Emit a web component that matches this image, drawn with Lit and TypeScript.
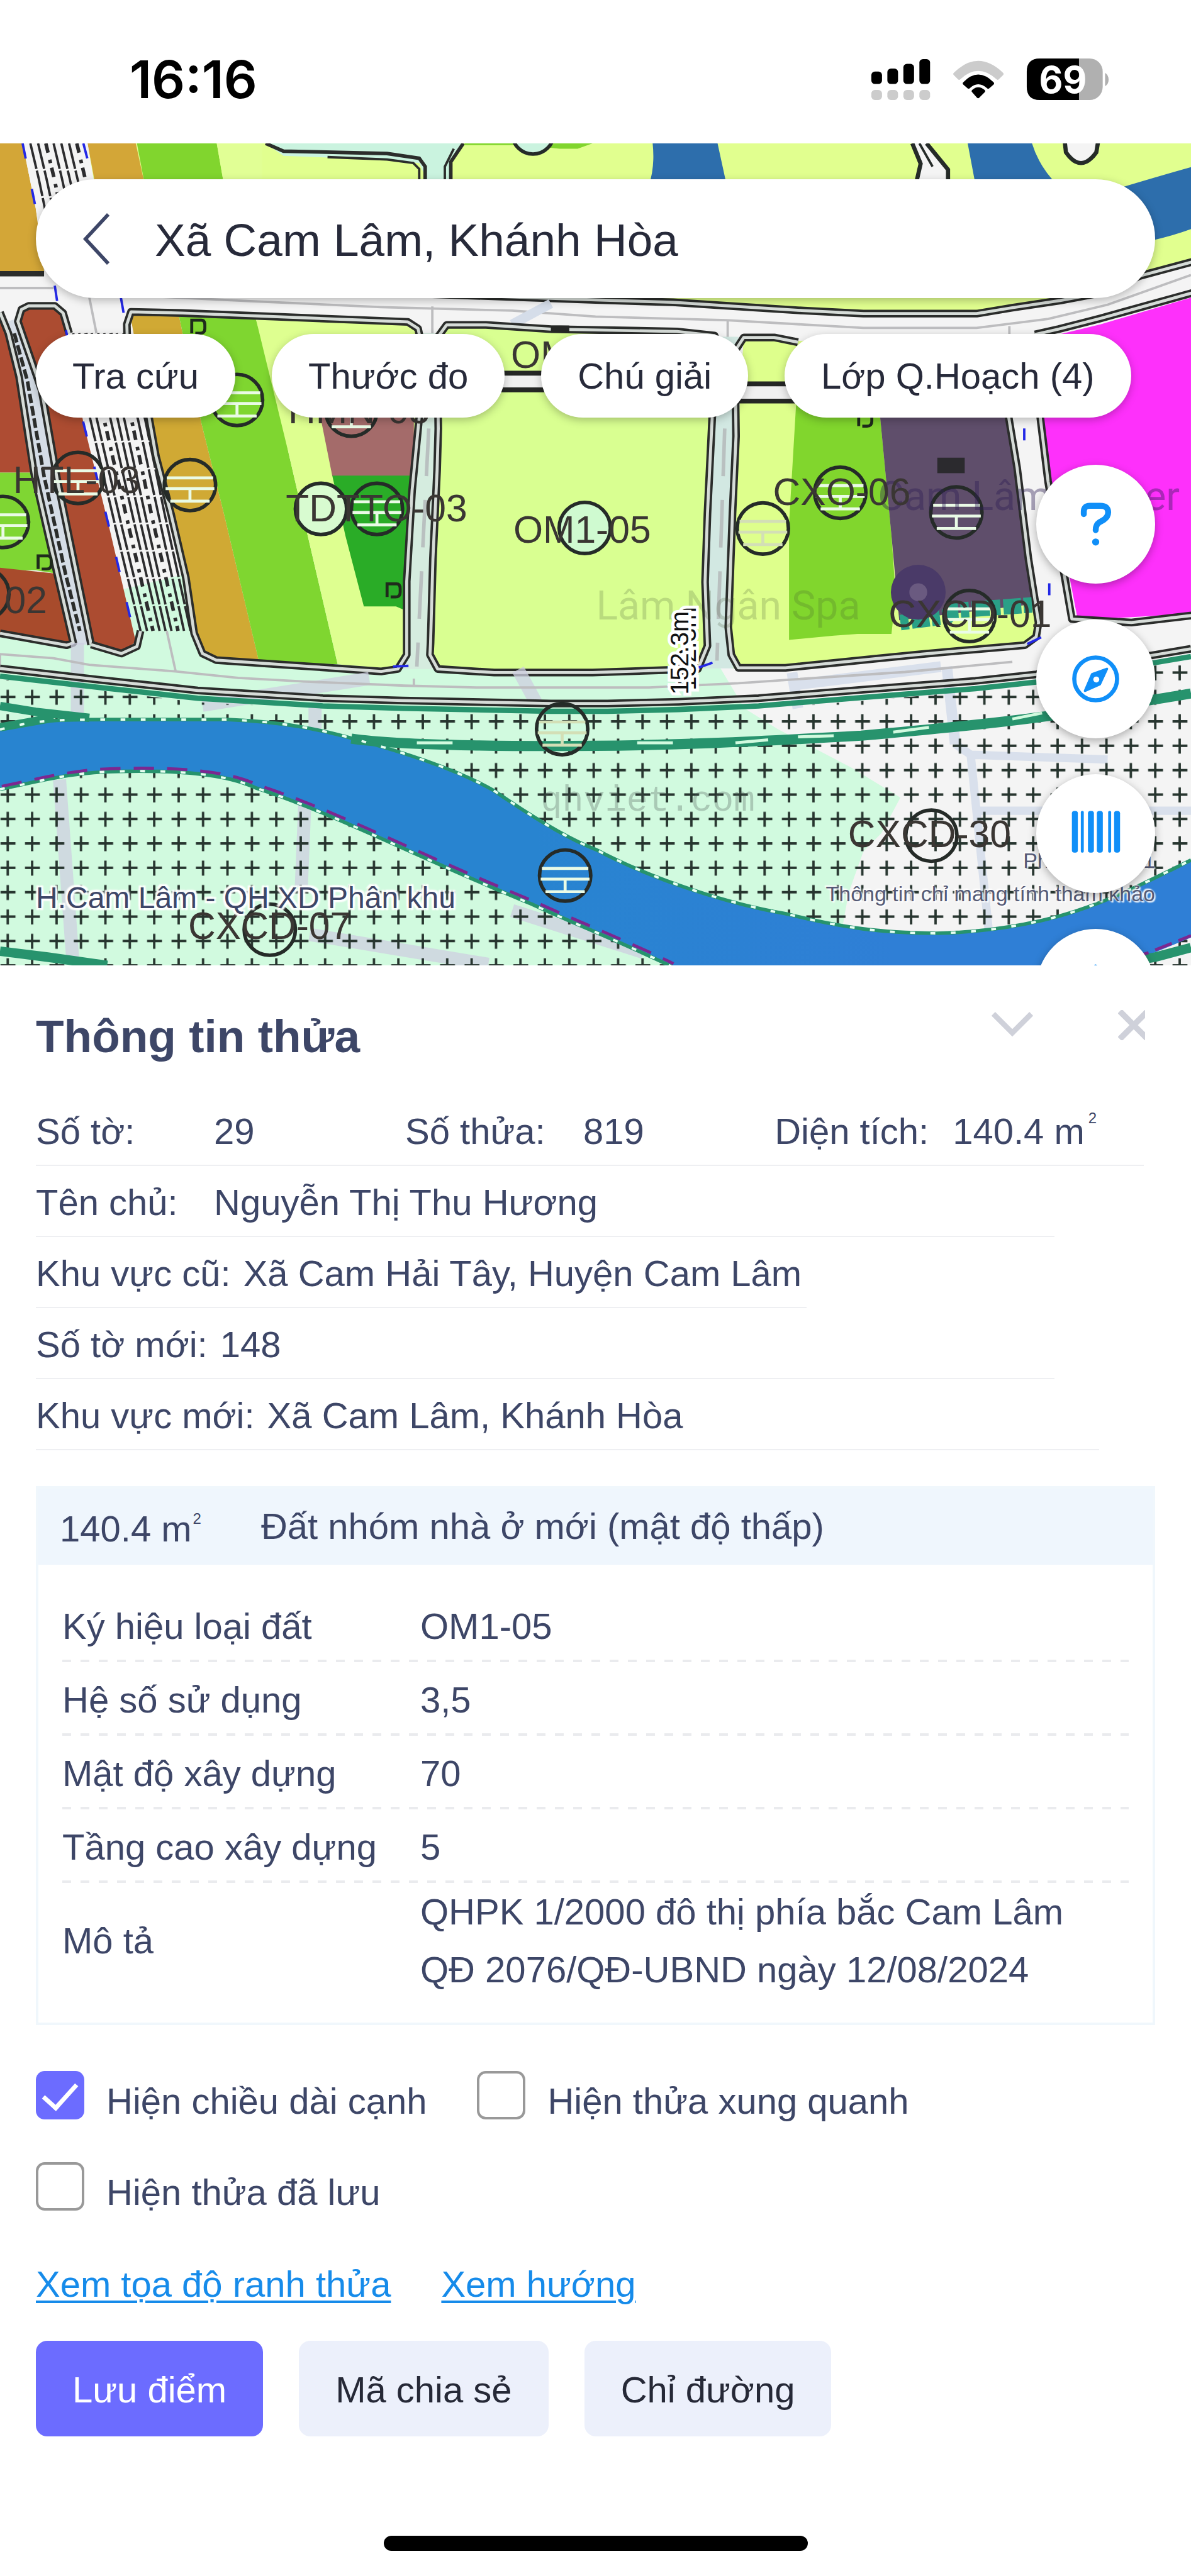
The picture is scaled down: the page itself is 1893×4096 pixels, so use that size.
import { LitElement, html, svg, css } from "lit";
import { customElement, state } from "lit/decorators.js";

type Point = [number, number];

const line = (points: Point[]): string => "M" + points.map((p) => p.join(" ")).join("L");

/* Kerb outline: a dark casing with a light core. */
const kerb = (d: string) => svg`
  <path class="casing" d=${d} />
  <path class="core" d=${d} />`;

/* Station mark with three level bars. */
const mark = (x: number, y: number, tone = "bars") => svg`
  <g transform="translate(${x} ${y})">
    <circle class="ring" r="43" />
    <path class=${tone} d="M-39-12H39M-41 6H41M-33 27H33M0 6V27" />
  </g>`;

const ring = (x: number, y: number, fill = "none") => svg`<circle class="ring" cx=${x} cy=${y} r="43" fill=${fill} />`;

const flag = (x: number, y: number) => svg`<path class="flag" d="M${x} ${y}v-22h16q6 0 6 8v6q0 8-8 8h-8" />`;

/* Lane lines evenly spread between the two sides of a road. */
const lanes = (left: Point[], right: Point[], count: number) =>
  Array.from({ length: count }, (_, i) => {
    const t = (i + 1) / (count + 1);
    const pts = left.map((p, k): Point => [
      Math.round(p[0] + (right[k][0] - p[0]) * t),
      Math.round(p[1] + (right[k][1] - p[1]) * t),
    ]);
    return svg`<path class=${i % 4 === 2 ? "lane broken" : "lane"} d=${line(pts)} />`;
  });

const RIVER_TOP = "M0 1226C60 1208 110 1209 200 1209H383C480 1213 540 1226 600 1243C700 1270 780 1300 829 1328C890 1370 950 1408 1000 1427C1100 1480 1230 1520 1319 1535C1420 1560 1480 1567 1570 1568C1680 1566 1770 1545 1829 1523C1880 1505 1950 1470 2000 1445";
const RIVER_LOW = "M0 1326C70 1312 120 1297 200 1296C300 1294 380 1300 430 1324C560 1366 700 1440 893 1519C960 1550 1060 1590 1128 1624";
const ROAD_LOW = "M0 1123L166 1142L332 1160L542 1173L676 1177L925 1182H1020L1140 1179L1274 1173L1446 1159L1638 1144L1740 1133L1941 1100L2000 1090";
const TEAL_BAND = "M590 1241C680 1254 900 1254 1000 1253C1130 1252 1250 1247 1446 1236C1560 1226 1700 1212 1780 1200C1850 1188 1940 1176 2000 1165";

@customElement("planning-map")
export class PlanningMap extends LitElement {
  static styles = css`
    :host { display: block; width: 100%; height: 100%; }
    svg { display: block; width: 100%; height: 100%; font-family: "Liberation Sans", Arial, sans-serif; }
    .casing { fill: none; stroke: #2b2d2b; stroke-width: 13; stroke-linejoin: round; }
    .core { fill: none; stroke: #d6dcd8; stroke-width: 5; stroke-linejoin: round; }
    .ring { stroke: #252b28; stroke-width: 6; }
    g .ring { fill: none; }
    .bars { fill: none; stroke: #eafbe6; stroke-width: 5; }
    .bars-soft { fill: none; stroke: #d3dfb6; stroke-width: 5; }
    .flag { fill: none; stroke: #1f2a1c; stroke-width: 5; }
    .lane { fill: none; stroke: #2c2c2e; stroke-width: 4; stroke-dasharray: 44 3; }
    .broken { stroke-dasharray: 16 12 6 8; stroke-width: 6; }
    .speckle { fill: none; stroke: #2b2d2b; stroke-width: 6; stroke-dasharray: 16 5; }
    .survey { fill: none; stroke: #2328e6; stroke-width: 4; stroke-dasharray: 26 52; }
    .centre { fill: none; stroke: #bdbdbf; stroke-width: 4; }
    .teal { fill: none; stroke: #27936d; }
    .bank { fill: none; stroke: #e8fff2; stroke-width: 4; stroke-dasharray: 8 26; }
    .street { fill: none; stroke: #cdcfe0; stroke-opacity: 0.75; stroke-width: 22; }
    .lot { font-size: 64px; fill: #3a3633; }
    .place { font-family: Roboto, "Liberation Sans", sans-serif; font-size: 68px; fill: #3a4a2e; fill-opacity: 0.2; }
    .place-dark { font-family: Roboto, "Liberation Sans", sans-serif; font-size: 68px; fill: #2c1f55; fill-opacity: 0.4; }
    .mono { font-family: "Liberation Mono", monospace; font-size: 60px; fill: #4c5a55; fill-opacity: 0.3; }
    .length { font-size: 42px; fill: #111; stroke: #fff; stroke-width: 10; paint-order: stroke; }
  `;

  render() {
    const roadL: Point[] = [[112, 560], [140, 706], [185, 893], [226, 1060]];
    const roadR: Point[] = [[217, 560], [255, 706], [287, 863], [330, 1060]];
    return html`
      <svg viewBox="0 241 2000 1381" preserveAspectRatio="xMidYMid slice" role="img" aria-label="Bản đồ quy hoạch">
        <defs>
          <pattern id="plus" x="-7" y="1151" width="41" height="41" patternUnits="userSpaceOnUse">
            <path d="M8 20H33M20 8V33" stroke="#27352f" stroke-width="4" />
          </pattern>
          <linearGradient id="river" x1="0" x2="1">
            <stop offset="0.45" stop-color="#2884d0" />
            <stop offset="0.75" stop-color="#2f7fd6" />
          </linearGradient>
        </defs>

        <!-- base -->
        <rect y="241" width="2000" height="1400" fill="#f4f4f4" />
        <path d="M0 1040L330 960L700 1000L1210 1123L1250 1190L1306 1225L1430 1290L1512 1340L1480 1400L1450 1430L1425 1500L1400 1640H0Z" fill="#d1fadf" />

        <!-- north parcels -->
        <path d="M150 241H2000V434L1913 464L1780 505L1640 528H1450L1300 515L1000 503L600 490L150 460Z" fill="#e1ff8f" />
        <path d="M0 241H38L60 350L76 456H0Z" fill="#d3a637" />
        <path d="M147 241H228L243 310H160Z" fill="#d3a637" />
        <path d="M230 241H364L376 310H243Z" fill="#81d52e" />
        <path d="M364 241H440V310H376Z" fill="#e1ff95" />
        <path d="M38 241H147L164 340L190 470H76L60 350Z" fill="#f4f4f4" />
        ${lanes([[38, 241], [52, 300], [80, 440]], [[142, 241], [156, 300], [190, 440]], 7)}
        <path class="survey" d="M38 241L60 350L76 456M140 241L158 310" />
        <path d="M446 241L476 262L640 268L704 274L720 310H755L760 262L778 241Z" fill="#caf3df" />
        <path d="M446 241L476 254L650 258L704 266L714 280V310M757 310V272L778 241" fill="none" stroke="#2b2d2b" stroke-width="6" />
        <path d="M550 264L650 268L694 274L704 284V310M747 310V280L762 250" fill="none" stroke="#2b2d2b" stroke-width="4" />
        <path d="M780 241H995L970 250H940L880 244H780Z" fill="#81d52e" />
        <circle cx="895" cy="224" r="35" fill="#caf3df" stroke="#252b28" stroke-width="6" />
        <path d="M1096 241H1205L1220 310H1090Q1100 280 1096 241Z" fill="#2d6eac" />
        <path d="M1625 241H1733Q1745 280 1775 310H1638Z" fill="#2d6eac" />
        <path d="M1880 316Q1950 295 2000 281V385Q1970 396 1935 404Z" fill="#2d6eac" />
        <path d="M1532 241L1546 275L1538 310H1592V285L1556 241" fill="#f4f4f4" stroke="#252b28" stroke-width="7" />
        <path d="M1544 241L1566 280" stroke="#252b28" stroke-width="4" />
        <path d="M1788 238L1790 256Q1815 292 1841 256L1844 238" fill="#f4f4f4" stroke="#252b28" stroke-width="7" />

        <!-- avenue -->
        ${kerb("M600 490L1000 504L1130 508L1240 515L1350 522L1450 527H1640L1700 517L1780 505L1850 492L1913 464L2010 438")}
        <path class="centre" d="M130 492L420 506L640 516L860 522L1000 532L1220 538L1450 551H1640L1760 536L1860 512L2000 462" />
        <path class="centre" d="M0 484H90M726 515V620M1222 540V610M1695 548V620M150 500L162 560" />
        <path d="M925 510L860 545" stroke="#d5dde9" stroke-width="16" />
        <path d="M0 460H74" stroke="#2b2d2b" stroke-width="9" />

        <!-- west parcels -->
        <path d="M0 530L13 560L32 633L57 794H0Z" fill="#ae4c33" />
        <path d="M0 794H57L96 964L60 958H0Z" fill="#7fd633" />
        <path d="M0 954L96 964L121 1083L0 1064Z" fill="#a84b2c" />
        <path d="M13 540L32 633L57 794L96 964L121 1083H150L96 805L70 656L30 535Z" fill="#d5dde6" />
        <path d="M30 530L40 517H98L108 540L140 710L185 893L228 1078L205 1096L153 1083L96 805L70 656Z" fill="#ac4c31" />
        ${kerb("M0 525L14 560L32 633L57 794L96 964L123 1080L112 1084L0 1064")}
        ${kerb("M153 1083L96 805L70 656L30 540L36 520L48 514H92L106 526L116 560")}
        ${kerb("M153 1083L204 1098L230 1086L236 1060")}
        <path class="speckle" d="M24 560L46 640L74 800L110 964L134 1060" />
        ${lanes(roadL, roadR, 9)}
        <path class="survey" d="M92 480L98 520L108 540L140 710L185 893L228 1078M203 500L211 545L255 710L287 863L332 1080" />

        <!-- central parcels -->
        <path d="M217 520L300 528L338 710L376 863L435 1112L363 1106L337 1090L312 970L262 767Z" fill="#d0a934" />
        <path d="M300 528L430 537L459 633L485 763L517 901L567 1116L435 1112L376 863L338 710Z" fill="#7fd630" />
        <path d="M430 537L695 542L706 565L700 760L679 1000V1110L665 1124L567 1116L517 901L485 763Z" fill="#deff90" />
        <path d="M530 660L695 650V800H558Z" fill="#a46b6a" />
        <path d="M558 799H692L679 977V1025L665 1019H611L580 900Z" fill="#2aac27" />
        <path d="M738 560L755 545L816 545L925 552L1137 558L1210 566L1196 701L1185 863L1182 1060L1186 1123L995 1130H830L735 1122L721 1080L733 824Z" fill="#d9ff91" />
        <path d="M1249 563H1300L1330 573L1740 566L1692 701L1708 786L1743 1046L1735 1078L1548 1098L1319 1123H1230L1223 1054L1239 733Z" fill="#deff8c" />
        <path d="M1338 660H1470L1478 701L1497 900L1504 1000L1497 1065H1440L1400 1068L1325 1075V880Z" fill="#81d62d" />
        <path d="M1470 660H1680L1692 701L1708 786L1727 939L1743 1014L1510 1042L1497 900L1478 701Z" fill="#5f4e6b" />
        <path d="M1745 570L1848 545L2000 500V1031L1810 1042L1765 809L1752 694Z" fill="#fe30fb" />
        <path d="M706 560H738L740 700L721 1080L735 1124H664L679 1100L692 824Z" fill="#d5ecdf" />
        <path d="M1210 566H1240L1239 733L1223 1054L1232 1123H1182V978L1196 701Z" fill="#d2e8e2" />
        <path d="M720 720L700 1120M1217 720L1204 1110" stroke="#b9c0c0" stroke-width="6" stroke-dasharray="80 40" />

        ${kerb("M217 700L213 545L220 524L306 526L459 532L612 538L685 541L702 552L708 580L704 701L692 824L683 977V1100L668 1124L640 1128L510 1119L363 1109L340 1098L326 1064L312 970L287 863L262 767L250 700")}
        ${kerb("M736 720L734 568L750 546L816 546L925 553L1137 557L1200 564L1206 580L1196 701L1188 863L1184 978L1188 1085L1172 1124L995 1130H830L735 1124L722 1100L723 1080L727 939L734 790Z")}
        ${kerb("M1692 690L1708 786L1727 939L1744 1046L1740 1070L1721 1084L1638 1091L1548 1099L1478 1106L1319 1122H1240L1228 1100L1223 1054L1230 863L1236 733L1234 590L1249 567H1300L1340 575")}
        <path d="M740 627H1196V655H740ZM1240 645H1400V674H1240Z" fill="#f0f0f0" stroke="#252725" stroke-width="8" />
        <path d="M925 553H956" stroke="#252725" stroke-width="12" />
        ${kerb("M1738 562L1778 553L1848 535L2010 490")}
        ${kerb("M1746 694L1760 809L1800 1040L1900 1046L2010 1033")}
        <path class="survey" d="M660 1120L700 1118L736 1120M1172 1122L1206 1110L1240 1116M1725 1082L1750 1070L1770 1074" />
        <path class="survey" d="M1720 720V740M1762 980V1000" />
        <path d="M1512 1046L1590 1036L1600 1026L1738 1016" fill="none" stroke="#2aa087" stroke-width="26" stroke-dasharray="14 5 30 4" />

        <!-- south road -->
        <path class="street" d="M130 1080V1200M340 1185L620 1140M529 1180V1225M870 1125L900 1180" />
        <path d="M1330 1130L1340 1190M1340 1150L1580 1120M1590 1120L1604 1250" fill="none" stroke="#d9e0ec" stroke-width="18" />
        <path class="centre" d="M0 1126L0 1099L90 1106L150 1117L295 1128L400 1139L510 1145L680 1152L800 1155H1090L1240 1148L1340 1141L1520 1129L1700 1112M280 1060L295 1128M695 1140V1152" />
        <path class="street" d="M100 1310L122 1610M512 1345L506 1490M860 1530L1080 1600M520 1570L820 1620" />
        <path d="M1604 1250L1630 1268L1660 1560M1630 1268L1860 1276M1640 1362H2000" fill="none" stroke="#d9e0ec" stroke-width="14" />
        <path d="M0 1141L166 1160L332 1180L542 1190L925 1200H1140L1446 1178L1740 1152L2000 1108V1640H0Z" fill="url(#plus)" />
        <path class="teal" stroke-width="9" transform="translate(0 13)" d=${ROAD_LOW} />
        ${kerb(ROAD_LOW)}

        <!-- river -->
        <path d="${RIVER_TOP}V1575L1925 1606L1900 1640H1140L1128 1624C1060 1590 960 1550 893 1519C700 1440 560 1366 430 1324C380 1300 300 1294 200 1296C120 1297 70 1312 0 1326Z" fill="url(#river)" />
        <path class="teal" stroke-width="17" d=${TEAL_BAND} />
        <path d="M700 1248H760M1070 1248H1130M1235 1248L1290 1243M1340 1238L1400 1236M1500 1230L1560 1222M1700 1208L1750 1198" stroke="#d1fadf" stroke-width="5" />
        <path class="teal" stroke-width="14" d="M0 1186L60 1196L150 1206M0 1222L90 1206" />
        <path class="teal" stroke-width="6" d=${RIVER_TOP} />
        <path class="bank" d=${RIVER_TOP} />
        <path class="teal" stroke-width="6" d=${RIVER_LOW} />
        <path d=${RIVER_LOW} fill="none" stroke="#7c2790" stroke-width="5" stroke-dasharray="34 22" transform="translate(3 -5)" />
        <path class="bank" d=${RIVER_LOW} />
        <path class="teal" stroke-width="16" d="M0 1598L80 1608L180 1622M1860 1622L1940 1608L2000 1592" />
        <path d="M1860 1622L1930 1600L2000 1572" fill="none" stroke="#7c2790" stroke-width="5" stroke-dasharray="30 12" />

        <!-- marks -->
        ${mark(131, 803)} ${mark(5, 877)} ${mark(319, 815)} ${mark(398, 672)} ${mark(590, 690)}
        ${ring(539, 855, "#d8fbd0")} ${mark(633, 855)} ${ring(982, 887, "#cffad0")}
        ${mark(1281, 888, "bars-soft")} ${mark(1411, 828)} ${mark(1606, 861)} ${mark(1628, 1035)}
        ${mark(944, 1225, "bars-soft")} ${mark(949, 1471)} ${ring(1564, 1404)} ${ring(453, 1562)} ${ring(-28, 998)}
        ${flag(322, 560)} ${flag(64, 956)} ${flag(650, 1003)} ${flag(1442, 716)}
        <rect x="1574" y="769" width="46" height="26" fill="#2b2a2e" />
        <circle cx="1542" cy="995" r="46" fill="#4a3a68" />
        <circle cx="1542" cy="995" r="15" fill="#6a5a80" />

        <!-- labels -->
        <text class="place" x="1001" y="1041">Lâm Ngân Spa</text>
        <text class="place-dark" x="1474" y="857">Cam Lâm Center</text>
        <text class="mono" x="908" y="1362">qhviet.com</text>
        <text class="lot" x="22" y="828">HTL-03</text>
        <text class="lot" x="8" y="1030">02</text>
        <text class="lot" x="484" y="711">HMN-05</text>
        <text class="lot" x="480" y="876">TDTTO-03</text>
        <text class="lot" x="858" y="618">OM</text>
        <text class="lot" x="862" y="912">OM1-05</text>
        <text class="lot" x="1298" y="849">CXO-06</text>
        <text class="lot" x="1492" y="1054">CXCD-01</text>
        <text class="lot" x="1424" y="1423">CXCD-30</text>
        <text class="lot" x="316" y="1578">CXCD-07</text>
        <text class="length" transform="translate(1168 1160) rotate(-90)">152.3m</text>
        <text class="length" transform="translate(1156 1167) rotate(-90)">152.3m</text>
      </svg>`;
  }
}

@customElement("app-root")
export class AppRoot extends LitElement {
  @state() private edges = true;
  @state() private nearby = false;
  @state() private saved = false;

  static styles = css`
    :host {
      display: block;
      background: #fff;
      color: #3d4667;
      font-family: "Liberation Sans", Arial, Helvetica, sans-serif;
      font-size: 58px;
      line-height: 66px;
    }
    * { box-sizing: border-box; }
    button { font: inherit; color: inherit; border: 0; padding: 0; background: none; cursor: pointer; }

    .status { height: 228px; padding: 24px 130px 0 206px; display: flex; align-items: center; justify-content: space-between; color: #000; }
    .clock { font-family: Inter, "Liberation Sans", sans-serif; font-size: 83px; font-weight: 600; line-height: 96px; }
    .signals { display: block; width: 379px; height: 66px; overflow: visible; }
    .level { font-family: Inter, sans-serif; font-weight: 700; font-size: 62px; fill: #fff; }

    .map { position: relative; aspect-ratio: 2000 / 1381; overflow: hidden; }
    .overlay { position: absolute; inset: 0; padding: 57px; display: flex; flex-direction: column; gap: 57px; }
    .captions { position: absolute; left: 57px; right: 57px; bottom: 77px; display: flex; justify-content: space-between; align-items: flex-end; }
    .caption { margin: 0; font-size: 48px; line-height: 60px; text-shadow: 0 0 4px #fff, 3px 3px 2px #fff, -3px 3px 2px #fff, 3px -3px 2px #fff, -3px -3px 2px #fff, 0 0 6px #fff; }
    .notes { margin: 0; padding-bottom: 10px; text-align: right; font-size: 34px; line-height: 53px; color: #555a75; text-shadow: 0 0 3px #fff, 2px 2px 2px #fff, -2px -2px 2px #fff; }

    .search { display: flex; align-items: center; gap: 72px; height: 189px; flex: none; padding: 0 75px; border-radius: 95px; background: #fff; box-shadow: 0 4px 14px rgba(0, 0, 0, 0.25); }
    .back { width: 42px; height: 82px; flex: none; }
    .back svg, .fab svg, .tool svg { display: block; width: 100%; height: 100%; }
    .place { flex: 1; min-width: 0; border: 0; outline: 0; padding: 4px 0 0; background: none; font: inherit; font-size: 73px; line-height: 84px; height: 88px; color: #272a3a; }
    .chips { display: flex; gap: 58px; flex: none; }
    .chip { height: 133px; padding: 0 58px; border-radius: 67px; background: #fff; color: #272a3a; white-space: nowrap; box-shadow: 0 4px 14px rgba(0, 0, 0, 0.25); }
    .fabs { display: flex; flex-direction: column; align-items: flex-end; gap: 57px; padding-top: 18px; }
    .fab { width: 189px; height: 189px; flex: none; border-radius: 50%; background: #fff; box-shadow: 0 4px 14px rgba(0, 0, 0, 0.3); }

    .sheet { padding: 0 57px; }
    .head { display: flex; align-items: flex-start; justify-content: space-between; padding: 71px 16px 51px 0; }
    .title { margin: 0; font-size: 73px; line-height: 84px; font-weight: 700; }
    .tools { display: flex; gap: 135px; }
    .tool { height: 48px; overflow: hidden; }
    .fold { width: 66px; }
    .close { width: 43px; }

    .facts { margin: 0; }
    .fact { display: flex; height: 113px; padding-top: 4px; align-items: center; border-bottom: 2px solid #eeeff2; white-space: nowrap; }
    .trio { width: 99%; display: grid; grid-template-columns: 1fr 1fr 1fr; }
    .pair { display: flex; align-items: center; }
    .medium { width: 91%; }
    .wide { width: 95%; }
    .snug { width: fit-content; padding-right: 8px; }
    .key { min-width: 283px; }
    .key-inline { padding-right: 20px; }
    .val { margin: 0; }
    sup { font-size: 24px; line-height: 24px; vertical-align: 33px; padding-left: 6px; }

    .plan { margin-top: 57px; border: 4px solid #f0f7fc; }
    .plan-head { display: flex; gap: 95px; height: 121px; align-items: center; padding: 2px 34px 4px; background: #eff6fd; }
    .plan-area { padding-top: 8px; }
    .plan-area sup { padding-left: 2px; vertical-align: 28px; }
    .plan-body { padding: 38px 38px 38px; }
    .table { width: 100%; border-collapse: collapse; text-align: left; }
    .table th { width: 569px; padding: 0; font-weight: 400; white-space: nowrap; }
    .table td { padding: 0; }
    .row { height: 117px; background: repeating-linear-gradient(90deg, #eaebee 0 14px, transparent 14px 29px) left bottom / 100% 4px no-repeat; }
    .row th, .row td { padding-top: 2px; }
    .row-last td { line-height: 92px; }

    .checks { display: flex; flex-wrap: wrap; gap: 68px 80px; margin-top: 73px; }
    .check { display: flex; align-items: flex-end; gap: 35px; line-height: 58px; }
    .box { appearance: none; margin: 0; width: 77px; height: 77px; border: 4px solid #999; border-radius: 14px; background: #fff; display: grid; place-items: center; }
    .box:checked { background: #6c6cff; border-color: #6c6cff; }
    .box:checked::before { content: ""; width: 46px; height: 23px; margin-top: -10px; border: solid #fff; border-width: 0 0 7px 7px; transform: rotate(-48deg); }
    .links { display: flex; gap: 80px; margin-top: 84px; }
    .links a { color: #168bea; text-decoration-thickness: 4px; text-underline-offset: 6px; }
    .actions { display: flex; gap: 57px; margin-top: 57px; }
    .action { height: 152px; padding: 4px 58px 0; border-radius: 18px; background: #ecf0fb; color: #262937; white-space: nowrap; }
    .primary { background: #6c6cff; color: #fff; }
    .home { display: flex; justify-content: center; padding: 158px 0 38px; }
    .bar { width: 674px; height: 24px; border-radius: 12px; background: #000; }
  `;

  private fab(label: string, art: unknown) {
    return html`<button class="fab" aria-label=${label}>
      <svg viewBox="0 0 200 200" fill="none" stroke="#108ff8" stroke-linecap="round" stroke-linejoin="round">${art}</svg>
    </button>`;
  }

  private row(name: string, value: string) {
    return html`<tr class="row"><th scope="row">${name}</th><td>${value}</td></tr>`;
  }

  render() {
    return html`
      <header class="status">
        <time class="clock">16:16</time>
        <svg class="signals" viewBox="1463 97 400 70" role="img" aria-label="Sóng, Wi-Fi, pin">
          <g>
            <rect x="1463" y="119" width="18" height="21" rx="6" /><rect x="1490" y="114" width="18" height="26" rx="6" />
            <rect x="1517" y="106" width="18" height="34" rx="6" /><rect x="1544" y="98" width="18" height="42" rx="6" />
          </g>
          <g fill="#ccc">
            <rect x="1463" y="150" width="18" height="17" rx="6" /><rect x="1490" y="150" width="18" height="17" rx="6" />
            <rect x="1517" y="150" width="18" height="17" rx="6" /><rect x="1544" y="150" width="18" height="17" rx="6" />
          </g>
          <path fill="#ccc" d="M1602 121Q1643 81 1685 121Q1687 123 1685 125L1678 132Q1676 134 1674 132Q1643 104 1613 132Q1611 134 1609 132L1602 125Q1600 123 1602 121Z" />
          <path d="M1618 137Q1643 111 1669 137Q1671 139 1669 141L1662 147Q1660 149 1658 147Q1643 134 1629 147Q1627 149 1625 147L1618 141Q1616 139 1618 137Z" />
          <path d="M1633 150Q1643 141 1654 150Q1656 152 1654 154L1645 163Q1643 165 1641 163L1633 154Q1631 152 1633 150Z" />
          <rect x="1725" y="97" width="128" height="70" rx="22" fill="#b0b0b0" />
          <path d="M1813 97H1747Q1725 97 1725 119V145Q1725 167 1747 167H1813Z" />
          <path fill="#b0b0b0" d="M1857 121Q1863 125 1863 132.500T1857 144Z" />
          <text class="level" x="1786" y="155" text-anchor="middle">69</text>
        </svg>
      </header>

      <section class="map">
        <planning-map></planning-map>
        <div class="captions">
          <p class="caption">H.Cam Lâm - QH XD Phân khu</p>
          <p class="notes">Phiên bản 1.1<br />Thông tin chỉ mang tính tham khảo</p>
        </div>
        <div class="overlay">
          <div class="search">
            <button class="back" aria-label="Quay lại">
              <svg viewBox="0 0 44 86" fill="none" stroke="#3d4667" stroke-width="6"><path d="M42 2L4 43L42 84" /></svg>
            </button>
            <input class="place" aria-label="Tìm kiếm" .value=${"Xã Cam Lâm, Khánh Hòa"} />
          </div>
          <nav class="chips">
            <button class="chip">Tra cứu</button>
            <button class="chip">Thước đo</button>
            <button class="chip">Chú giải</button>
            <button class="chip">Lớp Q.Hoạch (4)</button>
          </nav>
          <div class="fabs">
            ${this.fab("Trợ giúp", svg`<path stroke-width="10" d="M80 83V79Q80 69 90 69H108Q121 69 121 80Q121 88 113 93L106 97Q100 101 100 110" /><circle cx="100" cy="130" r="6" fill="#108ff8" stroke="none" />`)}
            ${this.fab("La bàn", svg`<circle cx="100" cy="100" r="36" stroke-width="7" /><path d="M119 83L94 92L82 120L107 109Z" fill="#108ff8" stroke-width="4" /><circle cx="101" cy="101" r="5" fill="#fff" stroke="none" />`)}
            ${this.fab("Mã vạch", svg`<g fill="#108ff8" stroke="none"><rect x="60" y="62" width="10" height="70" rx="4" /><rect x="75" y="62" width="5" height="70" rx="2" /><rect x="87" y="62" width="10" height="70" rx="4" /><rect x="102" y="62" width="10" height="70" rx="4" /><rect x="121" y="62" width="5" height="70" rx="2" /><rect x="131" y="62" width="10" height="70" rx="4" /></g>`)}
            ${this.fab("Vị trí", svg`<path stroke-width="6" d="M100 63L132 135L100 120L68 135Z" />`)}
          </div>
        </div>
      </section>

      <main class="sheet">
        <div class="head">
          <h1 class="title">Thông tin thửa</h1>
          <div class="tools">
            <button class="tool fold" aria-label="Thu gọn">
              <svg viewBox="0 0 70 50" fill="none" stroke="#cfd1da" stroke-width="9"><path d="M3 6L35 38L67 6" /></svg>
            </button>
            <button class="tool close" aria-label="Đóng">
              <svg viewBox="0 0 46 51" preserveAspectRatio="xMinYMid slice" fill="none" stroke="#cfd1da" stroke-width="10"><path d="M3 2L50 49M3 49L50 2" /></svg>
            </button>
          </div>
        </div>

        <dl class="facts">
          <div class="fact trio">
            <div class="pair"><dt class="key">Số tờ:</dt><dd class="val">29</dd></div>
            <div class="pair"><dt class="key">Số thửa:</dt><dd class="val">819</dd></div>
            <div class="pair"><dt class="key">Diện tích:</dt><dd class="val">140.4 m<sup>2</sup></dd></div>
          </div>
          <div class="fact medium"><dt class="key">Tên chủ:</dt><dd class="val">Nguyễn Thị Thu Hương</dd></div>
          <div class="fact snug"><dt class="key-inline">Khu vực cũ:</dt><dd class="val">Xã Cam Hải Tây, Huyện Cam Lâm</dd></div>
          <div class="fact medium"><dt class="key-inline">Số tờ mới:</dt><dd class="val">148</dd></div>
          <div class="fact wide"><dt class="key-inline">Khu vực mới:</dt><dd class="val">Xã Cam Lâm, Khánh Hòa</dd></div>
        </dl>

        <section class="plan">
          <div class="plan-head"><span class="plan-area">140.4 m<sup>2</sup></span><span>Đất nhóm nhà ở mới (mật độ thấp)</span></div>
          <div class="plan-body">
            <table class="table">
              <tbody>
                ${this.row("Ký hiệu loại đất", "OM1-05")}
                ${this.row("Hệ số sử dụng", "3,5")}
                ${this.row("Mật độ xây dựng", "70")}
                ${this.row("Tầng cao xây dựng", "5")}
                <tr class="row-last"><th scope="row">Mô tả</th><td>QHPK 1/2000 đô thị phía bắc Cam Lâm<br />QĐ 2076/QĐ-UBND ngày 12/08/2024</td></tr>
              </tbody>
            </table>
          </div>
        </section>

        <div class="checks">
          <label class="check"><input class="box" type="checkbox" .checked=${this.edges} @change=${() => (this.edges = !this.edges)} />Hiện chiều dài cạnh</label>
          <label class="check"><input class="box" type="checkbox" .checked=${this.nearby} @change=${() => (this.nearby = !this.nearby)} />Hiện thửa xung quanh</label>
          <label class="check"><input class="box" type="checkbox" .checked=${this.saved} @change=${() => (this.saved = !this.saved)} />Hiện thửa đã lưu</label>
        </div>

        <nav class="links"><a href="#toa-do">Xem tọa độ ranh thửa</a><a href="#huong">Xem hướng</a></nav>

        <div class="actions">
          <button class="action primary">Lưu điểm</button>
          <button class="action">Mã chia sẻ</button>
          <button class="action">Chỉ đường</button>
        </div>
      </main>
      <footer class="home"><div class="bar"></div></footer>
    `;
  }
}
